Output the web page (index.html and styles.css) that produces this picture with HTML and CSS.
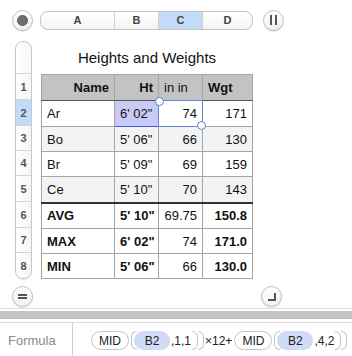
FILE: index.html
```html
<!DOCTYPE html>
<html lang="en">
<head>
  <meta charset="UTF-8">
  <title>Heights and Weights</title>
  <link rel="stylesheet" href="styles.css">
</head>
<body>

  <!-- Column header strip -->
  <div class="top-bar">
    <span class="round-btn"><span class="dot"></span></span>
    <div class="col-heads">
      <span class="col-a">A</span>
      <span class="col-b">B</span>
      <span class="col-c active">C</span>
      <span class="col-d">D</span>
    </div>
    <span class="round-btn"><span class="pause"></span></span>
  </div>

  <!-- Sheet -->
  <div class="sheet">
    <div class="row-heads">
      <span class="row-gap"></span>
      <span class="rh tall">1</span>
      <span class="rh tall active">2</span>
      <span class="rh">3</span>
      <span class="rh">4</span>
      <span class="rh tall">5</span>
      <span class="rh tall">6</span>
      <span class="rh">7</span>
      <span class="rh last">8</span>
    </div>
    <div class="content">
      <p class="title">Heights and Weights</p>
      <table class="grid">
        <colgroup>
          <col class="c-name"><col class="c-ht"><col class="c-in"><col class="c-wgt">
        </colgroup>
        <tr class="head tall">
          <th class="right">Name</th>
          <th class="right">Ht</th>
          <th class="left plain">in in</th>
          <th class="left">Wgt</th>
        </tr>
        <tr class="tall">
          <td>Ar</td>
          <td class="picked">6' 02"</td>
          <td class="num sel-cell">74<span class="sel"></span></td>
          <td class="num">171</td>
        </tr>
        <tr class="alt">
          <td>Bo</td><td>5' 06"</td><td class="num">66</td><td class="num">130</td>
        </tr>
        <tr>
          <td>Br</td><td>5' 09"</td><td class="num">69</td><td class="num">159</td>
        </tr>
        <tr class="alt tall">
          <td>Ce</td><td>5' 10"</td><td class="num">70</td><td class="num">143</td>
        </tr>
        <tr class="foot first tall">
          <td>AVG</td><td>5' 10"</td><td class="num plain">69.75</td><td class="num">150.8</td>
        </tr>
        <tr class="foot">
          <td>MAX</td><td>6' 02"</td><td class="num plain">74</td><td class="num">171.0</td>
        </tr>
        <tr class="foot">
          <td>MIN</td><td>5' 06"</td><td class="num plain">66</td><td class="num">130.0</td>
        </tr>
      </table>
    </div>
  </div>

  <!-- Bottom buttons -->
  <div class="bottom-controls">
    <span class="round-btn"><span class="equals"></span></span>
    <span class="round-btn"><span class="corner"></span></span>
  </div>

  <div class="divider"></div>

  <!-- Formula bar -->
  <div class="formula-bar">
    <span class="formula-label">Formula</span>
    <div class="formula">
      <span class="fn">MID</span>
      <span class="paren open"></span>
      <span class="ref">B2</span>
      <span class="txt">,1,1</span>
      <span class="paren close"></span>
      <span class="paren close"></span>
      <span class="txt op">×12+</span>
      <span class="fn">MID</span>
      <span class="paren open"></span>
      <span class="ref">B2</span>
      <span class="txt">,4,2</span>
      <span class="paren close"></span>
      <span class="paren close"></span>
    </div>
  </div>

</body>
</html>
```

FILE: styles.css
```css
* {
  box-sizing: border-box;
}
body {
  margin: 0;
  width: 352px;
  height: 356px;
  overflow: hidden;
  background: #fff;
  font-family: 'Liberation Sans', Arial, sans-serif;
  color: #111;
}

/* round buttons */
.round-btn {
  width: 21px;
  height: 21px;
  border-radius: 50%;
  border: 1px solid #bdbdbd;
  background: linear-gradient(#fff, #f1f1f1);
  box-shadow: 0 1px 1px rgba(0, 0, 0, 0.12);
  display: flex;
  align-items: center;
  justify-content: center;
  flex: none;
}
.dot {
  width: 11px;
  height: 11px;
  border-radius: 50%;
  background: #6f6f6f;
  border: 1px solid #5c5c5c;
}
.pause {
  width: 7px;
  height: 10px;
  border-left: 2px solid #555;
  border-right: 2px solid #555;
}
.equals {
  width: 9px;
  height: 5px;
  border-top: 2px solid #555;
  border-bottom: 2px solid #555;
}
.corner {
  width: 8px;
  height: 8px;
  border-right: 2px solid #555;
  border-bottom: 2px solid #555;
}

/* top bar */
.top-bar {
  height: 40px;
  display: flex;
  align-items: center;
  padding-left: 12px;
}
.top-bar .round-btn:last-child {
  margin-left: 10px;
}
.col-heads {
  margin-left: 7px;
  width: 213px;
  height: 19px;
  display: flex;
  border: 1px solid #c4c4c4;
  border-radius: 8px;
  overflow: hidden;
  background: linear-gradient(#fff, #f4f4f4);
  font-size: 11px;
  font-weight: bold;
  color: #444;
}
.col-heads span {
  display: flex;
  align-items: center;
  justify-content: center;
  border-right: 1px solid #d0d0d0;
}
.col-heads span:last-child {
  border-right: none;
}
.col-a { width: 74px; }
.col-b { width: 44px; }
.col-c { width: 44px; }
.col-d { flex: 1; }
.col-heads .active {
  background: #c4dbf8;
}

/* sheet */
.sheet {
  display: flex;
  padding-left: 15px;
  margin-top: 1px;
}
.row-heads {
  width: 17px;
  display: flex;
  flex-direction: column;
  border: 1px solid #c8c8c8;
  border-radius: 8px;
  overflow: hidden;
  background: linear-gradient(90deg, #fff, #f6f6f6);
  box-shadow: 0 1px 1px rgba(0, 0, 0, 0.1);
  font-size: 11px;
  font-weight: bold;
  color: #555;
}
.row-gap {
  height: 32px;
  border-bottom: 1px solid #d4d4d4;
}
.rh {
  height: 25px;
  display: flex;
  align-items: center;
  justify-content: center;
  border-bottom: 1px solid #d4d4d4;
}
.rh.tall {
  height: 26px;
}
.rh.last {
  border-bottom: none;
}
.rh.active {
  background: #c4dbf8;
}

.content {
  margin-left: 9px;
}
.title {
  margin: 0;
  height: 33px;
  display: flex;
  align-items: center;
  justify-content: center;
  font-size: 15px;
  color: #111;
}

/* table */
.grid {
  border-collapse: collapse;
  font-size: 13px;
  table-layout: fixed;
  width: 211px;
}
.c-name { width: 73px; }
.c-ht { width: 44px; }
.c-in { width: 44px; }
.c-wgt { width: 50px; }
.grid td,
.grid th {
  border: 1px solid #a4a4a4;
  height: 25px;
  padding: 0 5px;
  white-space: nowrap;
  text-align: left;
}
.grid tr.tall td,
.grid tr.tall th {
  height: 26px;
}
.grid .head th {
  background: #c3c3c3;
  font-weight: bold;
  border-bottom: 1px solid #555;
}
.grid th.right { text-align: right; }
.grid th.plain { font-weight: normal; }
.grid td.num { text-align: right; }
.grid tr.alt td { background: #f3f3f3; }
.grid tr.foot td { font-weight: bold; }
.grid tr.foot td.plain { font-weight: normal; }
.grid tr.foot.first td { border-top: 2px solid #333; }

.grid td.picked {
  background: #c9cbf6;
  border: 1px solid #3d5ae0;
}
.grid td.sel-cell {
  position: relative;
}
.sel {
  position: absolute;
  left: -1px;
  top: -1px;
  right: -1px;
  bottom: -1px;
  border: 1px solid #5f86d8;
}
.sel::before,
.sel::after {
  content: "";
  position: absolute;
  width: 7px;
  height: 7px;
  border-radius: 50%;
  border: 1px solid #5f7fc8;
  background: #fff;
}
.sel::before { left: -4px; top: -4px; }
.sel::after { right: -4px; bottom: -4px; }

/* bottom */
.bottom-controls {
  display: flex;
  justify-content: space-between;
  padding: 7px 70px 0 12px;
  height: 29px;
}
.divider {
  height: 15px;
  border-top: 1px solid #dcdcdc;
  border-bottom: 1px solid #dcdcdc;
  background: linear-gradient(#fff 0 2px, #c4c4c4 2px 10px, #fff 10px);
}

.formula-bar {
  display: flex;
  height: 35px;
  align-items: stretch;
}
.formula-label {
  width: 73px;
  border-right: 1px solid #d0d0d0;
  display: flex;
  align-items: center;
  padding-left: 8px;
  font-size: 13px;
  color: #8a8a8a;
}
.formula {
  display: flex;
  align-items: center;
  padding-left: 18px;
  font-size: 12px;
  color: #222;
}
.fn,
.ref {
  height: 19px;
  display: flex;
  align-items: center;
  justify-content: center;
  border-radius: 10px;
}
.fn {
  width: 38px;
  border: 1px solid #c4c4c4;
  background: #fff;
}
.ref {
  width: 36px;
  background: #cfdcf6;
  margin-left: -3px;
}
.paren {
  width: 6px;
  height: 19px;
  border: 1px solid #c4c4c4;
}
.paren.open {
  border-right: none;
  border-radius: 10px 0 0 10px;
  margin-left: 2px;
}
.paren.close {
  border-left: none;
  border-radius: 0 10px 10px 0;
}
.txt {
  padding: 0 1px;
}
.txt.op {
  padding: 0 2px 0 1px;
}
```
